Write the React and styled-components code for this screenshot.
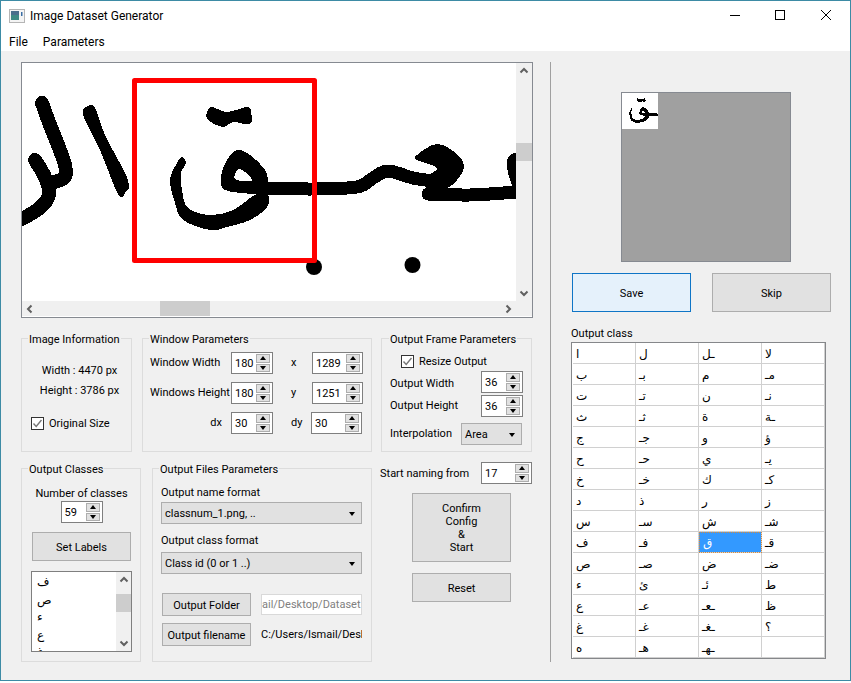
import React from "react";
import styled, { createGlobalStyle } from "styled-components";

const Global = createGlobalStyle`
  html, body { margin: 0; padding: 0; background: #fff; }
  body { font-family: Roboto, "DejaVu Sans", sans-serif; font-size: 11px; color: #000; }
  * { box-sizing: border-box; }
`;

const Win = styled.div`
  width: 851px; height: 681px;
  border: 1px solid #3d8ba5;
  background: #f0f0f0;
  display: flex; flex-direction: column;
  box-shadow: 0 2px 2px #cfcfcf;
`;
const TitleBar = styled.div`
  height: 29px; background: #fff; display: flex; align-items: center;
  padding-left: 8px; flex: none;
`;
const TitleText = styled.span`
  margin-left: 5px; font-size: 12px; line-height: 16px; margin-top: 1px;
`;
const WinButtons = styled.div`
  margin-left: auto; margin-right: 1px; display: flex; align-items: center;
`;
const WinButton = styled.svg`
  width: 46px; height: 29px; display: block; flex: none;
`;
const MenuBar = styled.div`
  height: 21px; background: #fff; display: flex; gap: 15px; padding-left: 8px; flex: none;
  font-size: 12px; line-height: 24px;
`;
const Body = styled.div`
  display: flex; flex: 1; padding: 11px 0 0 20px; min-height: 0;
`;
const LeftColumn = styled.div`
  width: 512px; flex: none; display: flex; flex-direction: column;
`;
const Divider = styled.div`
  width: 1px; height: 600px; background: #a0a0a0; margin-left: 17px; flex: none;
`;
const RightColumn = styled.div`
  padding-left: 20px; display: flex; flex-direction: column; align-items: flex-start;
`;

const ImageView = styled.div`
  height: 256px; border: 1px solid #868a91; background: #fff;
  display: grid; grid-template-columns: 494px 16px; grid-template-rows: 238px 15px;
`;
const Canvas = styled.svg`
  display: block; width: 494px; height: 238px;
`;
const VTrack = styled.div`
  background: #f0f0f0; display: flex; flex-direction: column; align-items: center;
  width: ${p => p.$w || 16}px;
  flex: none;
`;
const HTrack = styled.div`
  background: #f0f0f0; display: flex; align-items: center; height: 15px;
`;
const VThumb = styled.div`
  width: 100%; height: ${p => p.$size}px; background: #cdcdcd; margin-top: ${p => p.$offset}px; flex: none;
`;
const HThumb = styled.div`
  height: 100%; width: ${p => p.$size}px; background: #cdcdcd; margin-left: ${p => p.$offset}px; flex: none;
`;
const ArrowBox = styled.svg`
  width: 16px; height: 16px; flex: none; display: block;
  ${p => p.$end && (p.$horizontal ? "margin-left: auto;" : "margin-top: auto;")}
`;
const Corner = styled.div`
  background: #f0f0f0;
`;

const Chevron = ({ dir, end }) => {
  const paths = {
    up: "M4.5 9.5 L8 6 L11.5 9.5",
    down: "M4.5 6.5 L8 10 L11.5 6.5",
    left: "M9.5 4.5 L6 8 L9.5 11.5",
    right: "M6.5 4.5 L10 8 L6.5 11.5",
  };
  return (
    <ArrowBox viewBox="0 0 16 16" $end={end} $horizontal={dir === "left" || dir === "right"}>
      <path d={paths[dir]} fill="none" stroke="#606060" strokeWidth="2" />
    </ArrowBox>
  );
};

const Group = styled.fieldset`
  margin: 0 0 0 ${p => p.$ml || 0}px; padding: 0; min-width: 0;
  width: ${p => p.$w}px; height: ${p => p.$h}px; flex: none;
  border: 1px solid #dcdcdc;
`;
const Legend = styled.legend`
  margin-left: ${p => p.$ml ?? 7}px; padding: 0 1px; font-size: 11px; line-height: 17px; height: 15px; white-space: nowrap;
`;
const GroupRow = styled.div`
  display: flex; margin-top: ${p => p.$mt}px;
`;

const InfoBody = styled.div`
  display: flex; flex-direction: column; align-items: center; padding: 17px 0 0 6px;
`;
const InfoLine = styled.div`
  height: 16px; line-height: 16px; margin-bottom: 4px; white-space: nowrap;
`;
const CheckRow = styled.label`
  display: flex; align-items: center; gap: 5px; height: 16px; white-space: nowrap;
  ${p => p.$start && "align-self: flex-start; margin: 12px 0 0 3px;"}
  ${p => p.$span && "grid-column: 1 / -1; padding-left: 11px;"}
`;
const CheckText = styled.span`
  line-height: 16px; padding-top: 2px;
`;
const CheckBox = styled.svg`
  width: 13px; height: 13px; display: block; flex: none;
`;
const Check = () => (
  <CheckBox viewBox="0 0 13 13">
    <rect x="0.5" y="0.5" width="12" height="12" fill="#fff" stroke="#333" />
    <path d="M2.5 6.5 L5.2 9.5 L10.5 3" fill="none" stroke="#777" strokeWidth="1.4" />
  </CheckBox>
);

const WindowGrid = styled.div`
  display: grid; grid-template-columns: 81px 42px 18px 21px 51px; grid-auto-rows: 22px; row-gap: 8px;
  padding: 6px 0 0 7px; align-items: center;
`;
const Label = styled.span`
  line-height: 16px; white-space: nowrap;
  ${p => p.$right && "text-align: right; padding-right: 9px;"}
  ${p => p.$col && `grid-column: ${p.$col};`}
  ${p => p.$pt && `padding-top: ${p.$pt}px;`}
`;
const SpinWrap = styled.div`
  width: ${p => p.$w}px; height: 22px; border: 1px solid #7f7f7f; background: #fff;
  display: flex; align-items: center; flex: none;
  ${p => p.$nudge && `margin-left: ${p.$nudge}px;`}
`;
const SpinValue = styled.span`
  flex: 1; padding: 2px 0 0 3px; line-height: 18px;
`;
const SpinButtons = styled.div`
  width: 14px; height: 18px; display: flex; flex-direction: column; gap: 1px; margin-right: 2px; flex: none;
`;
const SpinButton = styled.div`
  flex: 1; background: #e1e1e1; border: 1px solid #adadad; display: flex; align-items: center; justify-content: center;
`;
const Tri = styled.div`
  width: 0; height: 0; border-left: 3.5px solid transparent; border-right: 3.5px solid transparent;
  ${p => p.$up ? "border-bottom: 4px solid #000;" : "border-top: 4px solid #000;"}
`;
const Spin = ({ w = 42, value, nudge }) => (
  <SpinWrap $w={w} $nudge={nudge}>
    <SpinValue>{value}</SpinValue>
    <SpinButtons>
      <SpinButton><Tri $up /></SpinButton>
      <SpinButton><Tri /></SpinButton>
    </SpinButtons>
  </SpinWrap>
);

const FrameGrid = styled.div`
  display: grid; grid-template-columns: 91px 42px; padding: 7px 0 0 8px; row-gap: 2px; align-items: center;
`;
const InterpRow = styled.div`
  grid-column: 1 / -1; display: flex; align-items: center; justify-content: space-between; margin-top: 4px;
  width: 132px;
`;
const ComboBox = styled.div`
  width: ${p => p.$w}px; height: 22px; background: #e1e1e1; border: 1px solid #adadad;
  display: flex; align-items: center; justify-content: space-between; padding: 1px 6px 0 3px; flex: none;
  line-height: 20px; white-space: nowrap;
  margin-top: ${p => p.$mt || 0}px;
`;

const ClassesBody = styled.div`
  display: flex; flex-direction: column; align-items: center; padding: 9px 0 0 1px;
`;
const ClassList = styled.div`
  width: 101px; height: 81px; margin-top: 10px; border: 1px solid #7f7f7f; background: #fff;
  display: flex; overflow: hidden;
`;
const ListItems = styled.div`
  flex: 1; padding: 2px 0 0 5px; height: 79px; overflow: hidden;
`;
const ListItem = styled.div`
  height: 17.5px; line-height: 17.5px; font-size: 12px;
`;
const Button = styled.div`
  width: ${p => p.$w}px; height: ${p => p.$h}px; flex: none;
  background: ${p => p.$default ? "#e5f1fb" : "#e1e1e1"};
  border: 1px solid ${p => p.$default ? "#0f75c6" : "#adadad"};
  display: flex; align-items: center; justify-content: center; text-align: center; line-height: 13px;
  white-space: nowrap; padding-top: 1px;
  ${p => p.$mt && `margin-top: ${p.$mt}px;`}
`;
const ConfirmText = styled.div`
  display: flex; flex-direction: column; line-height: 13px;
`;

const FilesBody = styled.div`
  display: flex; flex-direction: column; align-items: flex-start; padding: 8px 0 0 8px;
`;
const FieldLabel = styled.div`
  height: 16px; line-height: 18px; ${p => p.$mt && `margin-top: ${p.$mt}px;`}
`;
const FileActions = styled.div`
  display: grid; grid-template-columns: 89px 101px; column-gap: 10px; row-gap: 7px; margin: 19px 0 0 1px; align-items: center;
`;
const PathEdit = styled.div`
  height: 21px; background: #fff; border: 1px solid #d9d9d9; color: #808080; line-height: 19px;
  text-align: right; padding-right: 2px; overflow: hidden; white-space: nowrap;
`;
const PathLabel = styled.div`
  line-height: 16px; overflow: hidden; white-space: nowrap;
`;

const NamingColumn = styled.div`
  margin-left: 8px; width: 152px; display: flex; flex-direction: column; padding-top: 1px;
`;
const NamingRow = styled.div`
  display: flex; align-items: center; justify-content: space-between; height: 22px;
`;
const ActionStack = styled.div`
  margin-left: 32px; display: flex; flex-direction: column; gap: 11px; margin-top: 9px;
`;

const Preview = styled.div`
  width: 170px; height: 170px; margin: 30px 0 0 50px; background: #a0a0a0; border: 1px solid #868a91; flex: none;
`;
const PreviewCrop = styled.svg`
  display: block; width: 36px; height: 36px; background: #fff;
`;
const ActionRow = styled.div`
  display: flex; gap: 21px; margin: 11px 0 0 1px;
`;
const TableLabel = styled.div`
  height: 16px; line-height: 18px; margin-top: 13px;
`;
const Table = styled.div`
  width: 255px; height: 317px; margin-top: 1px; border: 1px solid #85878a; background: #fff; padding-left: 1px;
  display: grid; grid-template-columns: repeat(4, 63px); grid-auto-rows: 21px; flex: none;
`;
const Cell = styled.div`
  border-right: 1px solid #d0d0d0; border-bottom: 1px solid #d0d0d0;
  padding-left: 3px; line-height: 23px; font-size: 12px; white-space: nowrap; overflow: hidden;
  ${p => p.$selected && `
    background: #3399ff; color: #fff; outline: 1px dotted #d98c3c; outline-offset: -1px; padding-left: 4px;
  `}
`;

// Smooth closed / open outlines through traced points (Catmull-Rom to Bezier)
const smooth = (pts, closed) => {
  const n = pts.length;
  const at = i => (closed ? pts[(i + n) % n] : pts[Math.max(0, Math.min(n - 1, i))]);
  let d = `M${pts[0][0]} ${pts[0][1]}`;
  const last = closed ? n : n - 1;
  for (let i = 0; i < last; i++) {
    const [p0, p1, p2, p3] = [at(i - 1), at(i), at(i + 1), at(i + 2)];
    const c1 = [p1[0] + (p2[0] - p0[0]) / 6, p1[1] + (p2[1] - p0[1]) / 6];
    const c2 = [p2[0] - (p3[0] - p1[0]) / 6, p2[1] - (p3[1] - p1[1]) / 6];
    d += ` C${c1[0].toFixed(1)} ${c1[1].toFixed(1)} ${c2[0].toFixed(1)} ${c2[1].toFixed(1)} ${p2[0]} ${p2[1]}`;
  }
  return d + (closed ? " Z" : "");
};

const strokes = [
  { w: 14, pts: [[42, 103], [50, 125], [58, 145], [65, 165], [65, 177], [55, 182]] },
  { w: 14, pts: [[35, 160], [44, 175], [49, 190], [47, 200], [37, 210], [22, 219]] },
  { w: 13, pts: [[267, 188], [313, 189], [357, 187], [373, 178], [388, 171], [413, 178], [433, 181]] },
  { w: 13, pts: [[428, 194], [470, 195], [517, 192]] },
];
const fills = [
  [[83, 115], [88, 106], [95, 108], [105, 135], [128, 180], [125, 193], [118, 194], [100, 150]],
  [[207, 112], [212, 107], [227, 112], [247, 107], [251, 112], [250, 124], [233, 122], [223, 127], [208, 120]],
  [[182, 157], [186, 163], [181, 173], [182, 190], [188, 208], [210, 215], [233, 210], [255, 195], [268, 195], [267, 207], [250, 220], [227, 227], [210, 230], [183, 220], [175, 203], [170, 180], [177, 163]],
  [[417, 155], [437, 144], [457, 154], [464, 167], [457, 180], [447, 188], [428, 192], [428, 177], [437, 168], [417, 160]],
  [[507, 160], [517, 155], [518, 190], [510, 180]],
];
const loopOuter = [[237, 150], [250, 155], [265, 170], [268, 182], [268, 195], [253, 194], [225, 190], [221, 177], [227, 160]];
const loopHole = [[235, 179], [238, 169], [245, 172], [252, 181]];

const Ink = () => (
  <g shapeRendering="crispEdges">
    {strokes.map((s, i) => (
      <path key={i} d={smooth(s.pts)} fill="none" stroke="#000" strokeWidth={s.w} strokeLinecap="round" strokeLinejoin="round" />
    ))}
    {fills.map((f, i) => <path key={i} d={smooth(f, true)} fill="#000" />)}
    <path d={`${smooth(loopOuter, true)} ${smooth(loopHole, true)}`} fill="#000" fillRule="evenodd" />
  </g>
);

const rows = [
  ["ا", "ل", "ـل", "لا"],
  ["ب", "بـ", "م", "مـ"],
  ["ت", "تـ", "ن", "نـ"],
  ["ث", "ثـ", "ة", "ـة"],
  ["ج", "جـ", "و", "ؤ"],
  ["ح", "حـ", "ي", "يـ"],
  ["خ", "خـ", "ك", "كـ"],
  ["د", "ذ", "ر", "ز"],
  ["س", "سـ", "ش", "شـ"],
  ["ف", "فـ", "ق", "قـ"],
  ["ص", "صـ", "ض", "ضـ"],
  ["ء", "ئ", "ئـ", "ط"],
  ["ع", "عـ", "ـعـ", "ظ"],
  ["غ", "غـ", "ـغـ", "؟"],
  ["ه", "هـ", "ـهـ", ""],
];

const Caret = () => <Tri />;

export default function App() {
  return (
    <>
      <Global />
      <Win>
        <TitleBar>
          <svg width="16" height="14" viewBox="0 0 16 14">
            <rect x="0.5" y="0.5" width="15" height="13" fill="#f4f4f4" stroke="#b5b5b5" />
            <rect x="2" y="2" width="8" height="9" fill="#3f8a84" />
            <rect x="2" y="2" width="8" height="4" fill="#4a6f8c" />
            <rect x="12" y="3" width="1.5" height="4" fill="#3a6ea5" />
          </svg>
          <TitleText>Image Dataset Generator</TitleText>
          <WinButtons>
            <WinButton viewBox="0 0 46 29"><path d="M19 14.5 H29" stroke="#000" /></WinButton>
            <WinButton viewBox="0 0 46 29"><rect x="18.5" y="9.5" width="9" height="9" fill="none" stroke="#000" /></WinButton>
            <WinButton viewBox="0 0 46 29"><path d="M18 9 L28 19 M28 9 L18 19" stroke="#000" /></WinButton>
          </WinButtons>
        </TitleBar>
        <MenuBar><span>File</span><span>Parameters</span></MenuBar>
        <Body>
          <LeftColumn>
            <ImageView>
              <Canvas viewBox="22 63 494 238">
                <Ink />
                <circle cx="314" cy="267" r="8" fill="#000" />
                <circle cx="412.5" cy="265" r="8" fill="#000" />
                <rect x="134.5" y="80.5" width="180" height="180" fill="none" stroke="#f00" strokeWidth="5" strokeLinejoin="round" />
              </Canvas>
              <VTrack>
                <Chevron dir="up" />
                <VThumb $size={18} $offset={64} />
                <Chevron dir="down" end />
              </VTrack>
              <HTrack>
                <Chevron dir="left" />
                <HThumb $size={50} $offset={122} />
                <Chevron dir="right" end />
              </HTrack>
              <Corner />
            </ImageView>

            <GroupRow $mt={13}>
              <Group $w={111} $h={121}>
                <Legend $ml={6}>Image Information</Legend>
                <InfoBody>
                  <InfoLine>Width : 4470 px</InfoLine>
                  <InfoLine>Height : 3786 px</InfoLine>
                  <CheckRow $start><Check /><CheckText>Original Size</CheckText></CheckRow>
                </InfoBody>
              </Group>
              <Group $w={230} $h={121} $ml={10}>
                <Legend $ml={6}>Window Parameters</Legend>
                <WindowGrid>
                  <Label>Window Width</Label>
                  <Spin value="180" />
                  <Label $col={4}>x</Label>
                  <Spin w={51} value="1289" />
                  <Label>Windows Height</Label>
                  <Spin value="180" />
                  <Label $col={4}>y</Label>
                  <Spin w={51} value="1251" />
                  <Label $right>dx</Label>
                  <Spin value="30" />
                  <Label $col={4}>dy</Label>
                  <Spin w={51} value="30" nudge={-1} />
                </WindowGrid>
              </Group>
              <Group $w={151} $h={121} $ml={9}>
                <Legend>Output Frame Parameters</Legend>
                <FrameGrid>
                  <CheckRow $span><Check /><CheckText>Resize Output</CheckText></CheckRow>
                  <Label $pt={3}>Output Width</Label>
                  <Spin value="36" />
                  <Label>Output Height</Label>
                  <Spin value="36" />
                  <InterpRow>
                    <Label>Interpolation</Label>
                    <ComboBox $w={61}>Area<Caret /></ComboBox>
                  </InterpRow>
                </FrameGrid>
              </Group>
            </GroupRow>

            <GroupRow $mt={9}>
              <Group $w={120} $h={201}>
                <Legend $ml={6}>Output Classes</Legend>
                <ClassesBody>
                  <FieldLabel>Number of classes</FieldLabel>
                  <Spin value="59" />
                  <Button $w={99} $h={29} $mt={9}>Set Labels</Button>
                  <ClassList>
                    <ListItems>
                      {["ف", "ص", "ء", "ع", "غ"].map(c => <ListItem key={c}>{c}</ListItem>)}
                    </ListItems>
                    <VTrack $w={15}>
                      <Chevron dir="up" />
                      <VThumb $size={18} $offset={6} />
                      <Chevron dir="down" end />
                    </VTrack>
                  </ClassList>
                </ClassesBody>
              </Group>
              <Group $w={220} $h={201} $ml={11}>
                <Legend $ml={6}>Output Files Parameters</Legend>
                <FilesBody>
                  <FieldLabel>Output name format</FieldLabel>
                  <ComboBox $w={201} $mt={2}>classnum_1.png, ..<Caret /></ComboBox>
                  <FieldLabel $mt={8}>Output class format</FieldLabel>
                  <ComboBox $w={201} $mt={4}>Class id (0 or 1 ..)<Caret /></ComboBox>
                  <FileActions>
                    <Button $w={89} $h={23}>Output Folder</Button>
                    <PathEdit>ail/Desktop/Dataset</PathEdit>
                    <Button $w={89} $h={23}>Output filename</Button>
                    <PathLabel>C:/Users/Ismail/Deskt</PathLabel>
                  </FileActions>
                </FilesBody>
              </Group>
              <NamingColumn>
                <NamingRow>
                  <Label $pt={2}>Start naming from</Label>
                  <Spin w={51} value="17" />
                </NamingRow>
                <ActionStack>
                  <Button $w={99} $h={69}>
                    <ConfirmText>
                      <span>Confirm</span><span>Config</span><span>&amp;</span><span>Start</span>
                    </ConfirmText>
                  </Button>
                  <Button $w={99} $h={29}>Reset</Button>
                </ActionStack>
              </NamingColumn>
            </GroupRow>
          </LeftColumn>

          <Divider />

          <RightColumn>
            <Preview>
              <PreviewCrop viewBox="134 80 180 180"><Ink /></PreviewCrop>
            </Preview>
            <ActionRow>
              <Button $w={119} $h={39} $default>Save</Button>
              <Button $w={119} $h={39}>Skip</Button>
            </ActionRow>
            <TableLabel>Output class</TableLabel>
            <Table>
              {rows.flatMap((r, i) =>
                r.map((c, j) => (
                  <Cell key={`${i}-${j}`} $selected={i === 9 && j === 2}>{c}</Cell>
                ))
              )}
            </Table>
          </RightColumn>
        </Body>
      </Win>
    </>
  );
}
